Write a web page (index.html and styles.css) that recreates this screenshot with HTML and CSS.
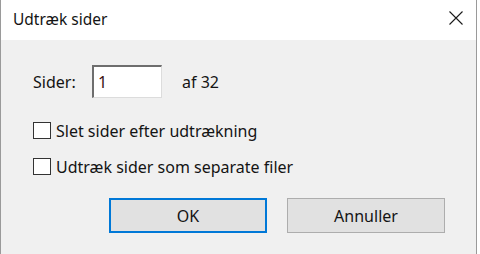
FILE: index.html
```html
<!DOCTYPE html>
<html lang="da">
<head>
  <meta charset="UTF-8">
  <meta name="viewport" content="width=device-width, initial-scale=1.0">
  <title>Udtræk sider</title>
  <link rel="stylesheet" href="styles.css">
</head>
<body>
  <div class="dialog">
    <div class="titlebar">
      <span class="title">Udtræk sider</span>
      <svg class="close" width="14" height="14" viewBox="0 0 14 14">
        <path d="M0.5 0.5 L13.5 13.5 M13.5 0.5 L0.5 13.5" stroke="#1a1a1a" stroke-width="1.1" fill="none"/>
      </svg>
    </div>
    <div class="content">
      <div class="pages-row">
        <span class="label">Sider:</span>
        <input class="pages" type="text" value="1">
        <span class="total">af 32</span>
      </div>
      <label class="check first">
        <input type="checkbox">
        <span>Slet sider efter udtrækning</span>
      </label>
      <label class="check second">
        <input type="checkbox">
        <span>Udtræk sider som separate filer</span>
      </label>
      <div class="buttons">
        <button class="btn primary">OK</button>
        <button class="btn">Annuller</button>
      </div>
    </div>
  </div>
</body>
</html>
```

FILE: styles.css
```css
body {
  margin: 0;
  background-color: #fff;
  font-family: "Noto Sans", "Open Sans", sans-serif;
  font-size: 16px;
  color: #141414;
}
.dialog {
  width: 475px;
  height: 254px;
  border-left: 1px solid #9a9a9a;
  border-right: 1px solid #9a9a9a;
  background-color: #f0f0f0;
  display: flex;
  flex-direction: column;
}
.titlebar {
  height: 40px;
  background-color: #fff;
  display: flex;
  justify-content: space-between;
  align-items: flex-start;
  padding: 0 13px 0 12px;
}
.title {
  font-size: 15.5px;
  line-height: 20px;
  margin-top: 9px;
}
.close {
  margin-top: 11px;
}
.content {
  padding: 25px 0 0 32px;
}
.pages-row {
  display: flex;
  align-items: center;
  height: 33px;
}
.label {
  width: 59px;
}
.pages {
  box-sizing: border-box;
  width: 70px;
  height: 33px;
  margin: 0;
  padding: 0 0 0 4px;
  border-style: solid;
  border-width: 2px 1px 1px 2px;
  border-color: #6e6e6e #dcdcdc #dcdcdc #6e6e6e;
  background-color: #fff;
  font-family: inherit;
  font-size: 16px;
  color: #3a1010;
  outline: none;
}
.total {
  margin-left: 20px;
}
.check {
  display: flex;
  align-items: center;
  height: 17px;
  gap: 5px;
}
.check.first {
  margin-top: 24px;
}
.check.second {
  margin-top: 19px;
}
.check input {
  appearance: none;
  box-sizing: border-box;
  width: 18px;
  height: 17px;
  margin: 0;
  border: 1px solid #333;
  background-color: #fff;
}
.buttons {
  display: flex;
  gap: 20px;
  margin: 23px 0 0 76px;
}
.btn {
  box-sizing: border-box;
  width: 158px;
  height: 35px;
  background-color: #e1e1e1;
  border: 1px solid #adadad;
  font-family: inherit;
  font-size: 16px;
  color: #141414;
  padding: 0;
}
.btn.primary {
  border: 2px solid #0078d7;
}
```
